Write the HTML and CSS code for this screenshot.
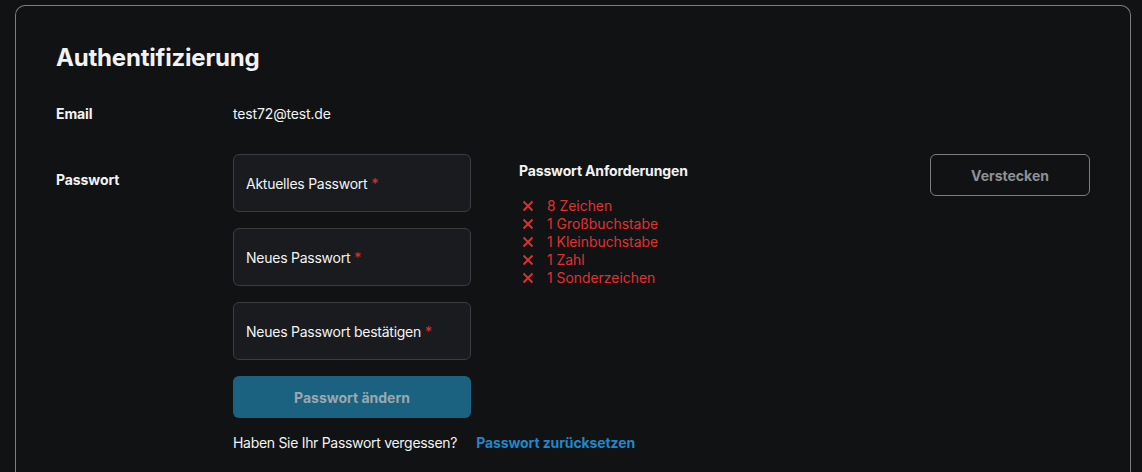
FILE: index.html
```html
<!DOCTYPE html>
<html lang="de">
<head>
<meta charset="utf-8">
<link rel="stylesheet" href="styles.css">
</head>
<body>
<div class="page">
  <section class="card">
    <h1 class="title">Authentifizierung</h1>
    <div class="row row-email">
      <div class="label">Email</div>
      <div class="value">test72@test.de</div>
    </div>
    <div class="row row-pw">
      <div class="label label-pw">Passwort</div>
      <div class="form">
        <div class="field">Aktuelles Passwort <span class="req">*</span></div>
        <div class="field">Neues Passwort <span class="req">*</span></div>
        <div class="field">Neues Passwort bestätigen <span class="req">*</span></div>
        <button class="submit">Passwort ändern</button>
        <div class="forgot">Haben Sie Ihr Passwort vergessen? <a class="link">Passwort zurücksetzen</a></div>
      </div>
      <div class="reqs">
        <div class="reqs-title">Passwort Anforderungen</div>
        <ul class="reqs-list">
          <li><svg class="x" viewBox="0 0 12 12"><path d="M1.5 1.5 L10.5 10.5 M10.5 1.5 L1.5 10.5"/></svg>8 Zeichen</li>
          <li><svg class="x" viewBox="0 0 12 12"><path d="M1.5 1.5 L10.5 10.5 M10.5 1.5 L1.5 10.5"/></svg>1 Großbuchstabe</li>
          <li><svg class="x" viewBox="0 0 12 12"><path d="M1.5 1.5 L10.5 10.5 M10.5 1.5 L1.5 10.5"/></svg>1 Kleinbuchstabe</li>
          <li><svg class="x" viewBox="0 0 12 12"><path d="M1.5 1.5 L10.5 10.5 M10.5 1.5 L1.5 10.5"/></svg>1 Zahl</li>
          <li><svg class="x" viewBox="0 0 12 12"><path d="M1.5 1.5 L10.5 10.5 M10.5 1.5 L1.5 10.5"/></svg>1 Sonderzeichen</li>
        </ul>
      </div>
      <div class="side">
        <button class="hide">Verstecken</button>
      </div>
    </div>
  </section>
</div>
</body>
</html>
```
FILE: styles.css
```css
html, body {
  margin: 0;
  padding: 0;
  background: #111214;
  font-family: Inter, "Noto Sans", sans-serif;
  color: #f1f3f5;
}
.page {
  padding: 5px 11px 0 15px;
  height: 472px;
  box-sizing: border-box;
  overflow: hidden;
}
.card {
  border: 1px solid #7d7e80;
  border-bottom: none;
  border-radius: 10px 10px 0 0;
  padding: 37px 40px 40px 40px;
  height: 600px;
  box-sizing: border-box;
}
.title {
  margin: 0;
  font-size: 24px;
  font-weight: 700;
  line-height: 30px;
  letter-spacing: -0.2px;
}
.row {
  display: flex;
}
.row-email {
  margin-top: 30px;
  align-items: center;
  height: 20px;
}
.label {
  width: 177px;
  font-size: 14px;
  font-weight: 700;
  flex: none;
  letter-spacing: -0.1px;
}
.value {
  font-size: 14px;
  letter-spacing: -0.15px;
}
.row-pw {
  margin-top: 31px;
}
.label-pw {
  padding-top: 17px;
}
.form {
  width: 238px;
  flex: none;
  display: flex;
  flex-direction: column;
  gap: 16px;
}
.field {
  height: 58px;
  box-sizing: border-box;
  border: 1px solid #3b3d42;
  border-radius: 6px;
  background: #1a1b1e;
  padding: 0 12px;
  display: flex;
  align-items: center;
  font-size: 14px;
  letter-spacing: -0.25px;
  gap: 4px;
}
.req {
  color: #e03131;
}
.submit {
  height: 42px;
  border: none;
  border-radius: 6px;
  background: #1b6280;
  color: #9aa8b0;
  font-family: inherit;
  font-size: 14px;
  font-weight: 700;
}
.forgot {
  margin-top: 0;
  font-size: 14px;
  letter-spacing: -0.3px;
  white-space: nowrap;
  display: flex;
  gap: 19px;
}
.link {
  color: #2187c7;
  font-weight: 700;
  letter-spacing: -0.1px;
}
.reqs {
  margin-left: 48px;
  padding-top: 9px;
  width: 300px;
}
.reqs-title {
  font-size: 14px;
  font-weight: 700;
  line-height: 16px;
  letter-spacing: -0.15px;
}
.reqs-list {
  list-style: none;
  margin: 18px 0 0 0;
  padding: 0;
  color: #e03131;
  font-size: 13.9px;
}
.reqs-list li {
  display: flex;
  align-items: center;
  height: 18px;
}
.x {
  width: 12px;
  height: 12px;
  margin-left: 3px;
  margin-right: 13px;
  fill: none;
  stroke: #e03131;
  stroke-width: 1.8;
}
.side {
  flex: 1;
  display: flex;
  justify-content: flex-end;
}
.hide {
  width: 160px;
  height: 42px;
  background: transparent;
  border: 1px solid #7d7e80;
  border-radius: 6px;
  color: #8d9196;
  font-family: inherit;
  font-size: 14px;
  font-weight: 700;
}
```
